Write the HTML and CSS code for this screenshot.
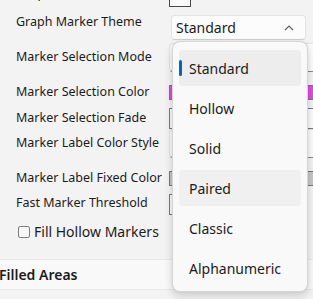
FILE: index.html
```html
<!DOCTYPE html>
<html>
<head>
<meta charset="utf-8">
<link rel="stylesheet" href="styles.css">
</head>
<body>
<div class="panel">
  <div class="row r-top">
    <div class="label">Shape Size</div>
    <div class="mini-box"></div>
  </div>
  <div class="row r-theme">
    <div class="label">Graph Marker Theme</div>
    <div class="combo">
      <span class="combo-text">Standard</span>
      <svg class="chev" width="10" height="6" viewBox="0 0 10 6"><polyline points="1,5 5,1 9,5" fill="none" stroke="#606060" stroke-width="1.2"/></svg>
    </div>
  </div>
  <div class="row r-mode">
    <div class="label">Marker Selection Mode</div>
    <div class="dropdown"></div>
  </div>
  <div class="row r-color">
    <div class="label">Marker Selection Color</div>
    <div class="swatch magenta"></div>
  </div>
  <div class="row r-fade">
    <div class="label">Marker Selection Fade</div>
    <div class="textbox"></div>
  </div>
  <div class="row r-style">
    <div class="label">Marker Label Color Style</div>
    <div class="dropdown"></div>
  </div>
  <div class="row r-fixed">
    <div class="label">Marker Label Fixed Color</div>
    <div class="swatch grey"></div>
  </div>
  <div class="row r-thresh">
    <div class="label">Fast Marker Threshold</div>
    <div class="textbox small"></div>
  </div>
  <div class="row r-check">
    <label class="check"><span class="box"></span><span>Fill Hollow Markers</span></label>
  </div>
  <div class="section">Filled Areas</div>
</div>

<div class="popup">
  <div class="item selected"><span class="pill"></span>Standard</div>
  <div class="item">Hollow</div>
  <div class="item">Solid</div>
  <div class="item hover">Paired</div>
  <div class="item">Classic</div>
  <div class="item">Alphanumeric</div>
</div>
</body>
</html>
```

FILE: styles.css
```css
html, body {
  margin: 0;
  padding: 0;
  background: #f3f3f3;
  overflow: hidden;
  width: 313px;
  height: 299px;
}
body {
  position: relative;
  font-family: "Noto Sans", "Open Sans", sans-serif;
  color: #1b1b1b;
}
.panel {
  margin-top: -18px;
  display: flex;
  flex-direction: column;
}
.row {
  display: flex;
  align-items: center;
}
.label {
  width: 153px;
  padding-left: 16px;
  font-size: 12.5px;
  line-height: 18px;
  white-space: nowrap;
  flex: none;
}
.r-top { height: 26px; align-items: flex-start; }
.r-top .label { margin-top: 3px; }
.r-top .mini-box { align-self: flex-end; margin-bottom: 1px; }
.r-theme { height: 32px; align-items: flex-start; }
.r-theme .label { margin-top: 5px; }
.r-mode { height: 34px; }
.r-color { height: 36px; }
.r-fade { height: 16px; }
.r-style { height: 34px; }
.r-fixed { height: 36px; }
.r-thresh { height: 14px; }
.r-check { height: 44px; }

.mini-box {
  width: 22px;
  height: 20px;
  border: 1px solid #4a4a4a;
  background: #fbfbfb;
  box-sizing: border-box;
}
.combo {
  margin-top: 7px;
  margin-left: 2px;
  width: 135px;
  height: 25px;
  box-sizing: border-box;
  border: 1px solid #e3e3e3;
  border-bottom-color: #cfcfcf;
  border-radius: 4px;
  background: #fcfcfc;
  display: flex;
  align-items: center;
  justify-content: space-between;
  padding: 0 11px 0 4px;
}
.combo-text {
  font-size: 14px;
  line-height: 18px;
}
.chev { display: block; }
.dropdown {
  width: 170px;
  height: 29px;
  flex: none;
  box-sizing: border-box;
  border: 1px solid #e3e3e3;
  border-bottom-color: #8a8a8a;
  border-radius: 4px;
  background: #fbfbfb;
}
.swatch {
  flex: none;
  width: 170px;
  height: 15px;
  box-sizing: border-box;
  border: 1px solid #777;
}
.magenta { background: #e448e6; }
.grey { background: #c6c6c6; }
.textbox {
  flex: none;
  width: 170px;
  height: 21px;
  box-sizing: border-box;
  border: 1px solid #7a7a7a;
  background: #fbfbfb;
}
.textbox.small { width: 90px; margin-top: 2px; }

.check {
  display: flex;
  align-items: center;
  margin-left: 18px;
  font-size: 14px;
  line-height: 18px;
  gap: 4px;
}
.check .box {
  width: 12px;
  height: 12px;
  box-sizing: border-box;
  border: 1px solid #7d7d7d;
  border-radius: 2px;
  background: #f7f7f7;
}
.section {
  margin-top: 5px;
  height: 31px;
  box-sizing: border-box;
  border-top: 1px solid #e8e8e8;
  border-bottom: 1px solid #e8e8e8;
  background: #f9f9f9;
  font-size: 14px;
  font-weight: 600;
  line-height: 29px;
  padding-left: 0;
  margin-left: -1px;
}

.popup {
  position: absolute;
  left: 172px;
  top: 41px;
  width: 136px;
  height: 251px;
  box-sizing: border-box;
  background: #f9f9f9;
  border: 1px solid #d6d6d6;
  border-radius: 8px;
  box-shadow: 0 4px 8px rgba(0, 0, 0, 0.16), 0 0 2px rgba(0,0,0,0.08);
  padding: 8px 6px 4px 6px;
  display: flex;
  flex-direction: column;
  gap: 4px;
}
.item {
  position: relative;
  height: 36px;
  flex: none;
  border-radius: 4px;
  display: flex;
  align-items: center;
  padding-left: 10px;
  font-size: 14px;
  color: #1b1b1b;
}
.item.selected { background: #ededed; }
.item.hover { background: #f0f0f0; }
.pill {
  position: absolute;
  left: 0;
  top: 10px;
  width: 3px;
  height: 16px;
  border-radius: 2px;
  background: #0067c0;
}
```
